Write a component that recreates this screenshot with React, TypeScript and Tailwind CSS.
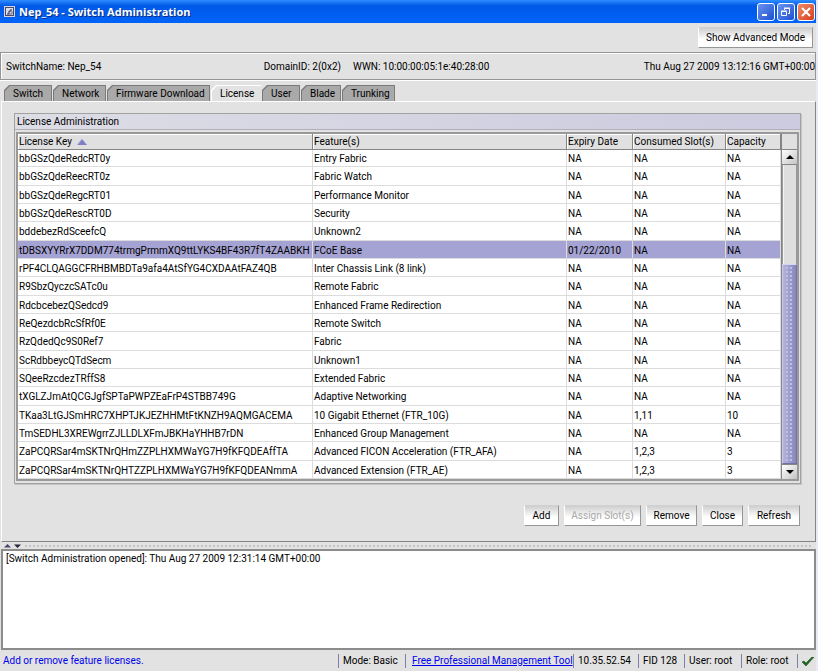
import React from 'react';

interface License {
  key: string;
  feature: string;
  expiry?: string;
  slots?: string;
  capacity?: string;
}

const licenses: License[] = [
  { key: 'bbGSzQdeRedcRT0y', feature: 'Entry Fabric' },
  { key: 'bbGSzQdeReecRT0z', feature: 'Fabric Watch' },
  { key: 'bbGSzQdeRegcRT01', feature: 'Performance Monitor' },
  { key: 'bbGSzQdeRescRT0D', feature: 'Security' },
  { key: 'bddebezRdSceefcQ', feature: 'Unknown2' },
  { key: 'tDBSXYYRrX7DDM774trmgPrmmXQ9ttLYKS4BF43R7fT4ZAABKH', feature: 'FCoE Base', expiry: '01/22/2010' },
  { key: 'rPF4CLQAGGCFRHBMBDTa9afa4AtSfYG4CXDAAtFAZ4QB', feature: 'Inter Chassis Link (8 link)' },
  { key: 'R9SbzQyczcSATc0u', feature: 'Remote Fabric' },
  { key: 'RdcbcebezQSedcd9', feature: 'Enhanced Frame Redirection' },
  { key: 'ReQezdcbRcSfRf0E', feature: 'Remote Switch' },
  { key: 'RzQdedQc9S0Ref7', feature: 'Fabric' },
  { key: 'ScRdbbeycQTdSecm', feature: 'Unknown1' },
  { key: 'SQeeRzcdezTRffS8', feature: 'Extended Fabric' },
  { key: 'tXGLZJmAtQCGJgfSPTaPWPZEaFrP4STBB749G', feature: 'Adaptive Networking' },
  { key: 'TKaa3LtGJSmHRC7XHPTJKJEZHHMtFtKNZH9AQMGACEMA', feature: '10 Gigabit Ethernet (FTR_10G)', slots: '1,11', capacity: '10' },
  { key: 'TmSEDHL3XREWgrrZJLLDLXFmJBKHaYHHB7rDN', feature: 'Enhanced Group Management' },
  { key: 'ZaPCQRSar4mSKTNrQHmZZPLHXMWaYG7H9fKFQDEAffTA', feature: 'Advanced FICON Acceleration (FTR_AFA)', slots: '1,2,3', capacity: '3' },
  { key: 'ZaPCQRSar4mSKTNrQHTZZPLHXMWaYG7H9fKFQDEANmmA', feature: 'Advanced Extension (FTR_AE)', slots: '1,2,3', capacity: '3' },
];

const selectedKey = licenses[5].key;

const tabs = [
  { name: 'Switch', width: 'w-12' },
  { name: 'Network', width: 'w-[53px]' },
  { name: 'Firmware Download', width: 'w-[103px]' },
  { name: 'License', width: 'w-[50px]' },
  { name: 'User', width: 'w-[38px]' },
  { name: 'Blade', width: 'w-10' },
  { name: 'Trunking', width: 'w-[53px]' },
];

const tabShape = '[clip-path:polygon(5px_0,100%_0,100%_100%,0_100%,0_5px)]';

const Tab = ({ name, width, active }: { name: string; width: string; active: boolean }) => (
  <button
    role="tab"
    aria-selected={active}
    className={`${width} ${tabShape} h-4 shrink-0 ${active ? 'bg-white pt-px pl-px' : 'bg-[#7b7b7b] p-px pb-0'}`}
  >
    <span
      className={`${tabShape} flex h-full items-center pl-2 whitespace-nowrap ${
        active ? 'bg-[#e2e2e2]' : 'bg-[#a9a9a9]'
      }`}
    >
      {name}
    </span>
  </button>
);

const PushButton = ({ children, width, disabled }: { children: React.ReactNode; width: string; disabled?: boolean }) => (
  <button
    disabled={disabled}
    className={`${width} h-[21px] border border-t-[#d0d0d0] border-l-white border-r-[#969696] border-b-[#969696] bg-linear-to-b from-[#cfcfcf] to-white to-60% whitespace-nowrap disabled:text-[#a8a8a8]`}
  >
    {children}
  </button>
);

const WindowButton = ({ label, color, children }: { label: string; color: string; children: React.ReactNode }) => (
  <button
    aria-label={label}
    className={`flex size-[18px] items-center justify-center rounded-[3px] border border-white ${color}`}
  >
    <svg width="12" height="12" viewBox="0 0 12 12" fill="none" stroke="#fff">
      {children}
    </svg>
  </button>
);

const TitleBar = () => (
  <header className="flex h-[23px] items-center bg-linear-to-b from-[#2f8cff] via-[#0058e6] via-25% to-[#0064fa] pr-px pl-1">
    <svg width="11" height="11" viewBox="0 0 11 11" aria-hidden="true">
      <rect x=".5" y=".5" width="10" height="10" fill="#4a4a6c" stroke="#d6d3e2" />
      <path d="M2 2h7v7H2z" fill="#dcdce8" />
      <path d="M3 8h2V5h2V3" fill="none" stroke="#25254a" />
      <path d="M5 8h3V5" fill="none" stroke="#65658a" />
    </svg>
    <h1 className="ml-1 flex-1 font-['Open_Sans',sans-serif] text-[11px] font-bold text-white [text-shadow:1px_1px_#0a2a80]">
      Nep_54 - Switch Administration
    </h1>
    <div className="flex gap-[2px]">
      <WindowButton label="Minimize" color="bg-linear-to-br from-[#6b92f0] to-[#1d4fd0]">
        <path d="M2 9h5" strokeWidth="2" />
      </WindowButton>
      <WindowButton label="Restore" color="bg-linear-to-br from-[#6b92f0] to-[#1d4fd0]">
        <path d="M4.5 4V2.500h5v5H8M4 2h6" />
        <path d="M1.500 5.500h5v4h-5zM1 5h6" />
      </WindowButton>
      <WindowButton label="Close" color="bg-linear-to-br from-[#f08a68] to-[#d63c12]">
        <path d="M2 2l8 8M10 2l-8 8" strokeWidth="2" />
      </WindowButton>
    </div>
  </header>
);

const LicenseTable = () => (
  <table className="w-full flex-1 table-fixed border-separate border-spacing-0 text-left">
    <colgroup>
      <col className="w-[295px]" />
      <col />
      <col className="w-[66px]" />
      <col className="w-[93px]" />
      <col className="w-[55px]" />
    </colgroup>
    <thead>
      <tr className="h-4 bg-[#e0e0e0]">
        {['License Key', 'Feature(s)', 'Expiry Date', 'Consumed Slot(s)', 'Capacity'].map((title) => (
          <th
            key={title}
            scope="col"
            className="border-r border-b border-[#858585] p-0 pl-px font-normal whitespace-nowrap shadow-[inset_1px_1px_#fff]"
          >
            {title}
            {title === 'License Key' && (
              <svg className="ml-[5px] inline align-baseline" width="10" height="6" viewBox="0 0 10 6" aria-hidden="true">
                <path d="M5 0l5 6H0z" fill="#7f7fc4" />
                <path d="M5 0L0 6" stroke="#b9b9e6" />
              </svg>
            )}
          </th>
        ))}
      </tr>
    </thead>
    <tbody>
      {licenses.map(({ key, feature, expiry = 'NA', slots = 'NA', capacity = 'NA' }) => (
        <tr
          key={key}
          aria-selected={key === selectedKey}
          className={`h-[18px] first:h-[17px] nth-[3n+2]:h-[19px] ${key === selectedKey ? 'bg-[#a5a3d3]' : 'bg-white'}`}
        >
          {[key, feature, expiry, slots, capacity].map((value, i) => (
            <td key={i} className="border-r border-b border-[#dcdcdc] p-0 pt-[2px] pl-px whitespace-nowrap">
              {value}
            </td>
          ))}
        </tr>
      ))}
    </tbody>
  </table>
);

const ScrollBar = () => (
  <div className="flex w-4 shrink-0 flex-col border-l border-[#858585]">
    <div className="h-4 border-b border-[#858585] bg-[#e0e0e0]" />
    <button
      aria-label="Scroll up"
      className="flex h-[15px] items-center justify-center border-b border-[#858585] bg-linear-to-br from-white to-[#c4c4c4]"
    >
      <svg width="8" height="4" viewBox="0 0 8 4"><path d="M4 0l4 4H0z" /></svg>
    </button>
    <div className="flex flex-1 flex-col bg-[#dedede]">
      <div className="flex-1 border-r border-l border-[#9a9a9a] shadow-[inset_1px_0_#f4f4f4]" />
      {/* thumb */}
      <div className="h-[200px] border border-t-[#d5d5f2] border-r-[#7372a8] border-b-[#7372a8] border-l-[#c7c7ea] bg-linear-to-r from-[#b5b4dd] to-[#8786bb] px-[2px] py-px">
        <div className="h-full bg-[radial-gradient(circle,#c0c0e6_1px,transparent_1px)] bg-size-[4px_4px]" />
      </div>
    </div>
    <button
      aria-label="Scroll down"
      className="flex h-[15px] items-center justify-center border-t border-[#858585] bg-linear-to-br from-white to-[#c4c4c4]"
    >
      <svg width="8" height="4" viewBox="0 0 8 4"><path d="M0 0h8L4 4z" /></svg>
    </button>
  </div>
);

const StatusItem = ({ children, width }: { children: React.ReactNode; width: string }) => (
  <div className={`${width} flex h-[14px] shrink-0 items-center border-l border-[#7f7fae] pl-1 whitespace-nowrap`}>
    {children}
  </div>
);

const App = () => (
  <div className="flex min-h-screen flex-col border-r-2 border-[#e6ebf7] bg-[#e2e2e2] font-[Roboto,'Liberation_Sans',sans-serif] text-[10px] leading-3 text-black">
    <TitleBar />

    <div className="flex justify-end px-[3px] pt-1 pb-1">
      <PushButton width="w-[115px]">Show Advanced Mode</PushButton>
    </div>

    <section className="flex h-7 items-center justify-between border border-[#949494] pt-px pl-[5px] shadow-[inset_1px_1px_#fff,0_1px_#fff]">
      <span>SwitchName: Nep_54</span>
      <div className="flex gap-3 pl-2">
        <span>DomainID: 2(0x2)</span>
        <span>WWN: 10:00:00:05:1e:40:28:00</span>
      </div>
      <span>Thu Aug 27 2009 13:12:16 GMT+00:00</span>
    </section>

    <div role="tablist" className="mt-[5px] flex gap-px pl-1">
      {tabs.map((tab) => (
        <Tab key={tab.name} {...tab} active={tab.name === 'License'} />
      ))}
    </div>

    <main className="ml-px border border-t-white border-r-[#858585] border-b-[#858585] border-l-white pt-[11px] pr-[14px] pb-[15px] pl-3">
      <section className="border border-[#a2a2a2] shadow-[1px_1px_#c4c4c4]">
        <h2 className="flex h-4 items-center border-b border-[#b0b0b8] bg-linear-to-r from-[#dddde6] to-[#cccbdf] pl-[2px]">
          License Administration
        </h2>
        <div className="mx-px mt-[2px] mb-[2px] flex border-2 border-[#999]">
          <LicenseTable />
          <ScrollBar />
        </div>
      </section>

      <div className="mt-[21px] flex justify-end gap-[5px] pr-px">
        <PushButton width="w-[35px]">Add</PushButton>
        <PushButton width="w-[77px]" disabled>Assign Slot(s)</PushButton>
        <PushButton width="w-[51px]">Remove</PushButton>
        <PushButton width="w-[41px]">Close</PushButton>
        <PushButton width="w-[52px]">Refresh</PushButton>
      </div>
    </main>

    {/* split pane divider */}
    <div className="flex h-[7px] items-center gap-[3px] px-1">
      <svg width="17" height="4" viewBox="0 0 17 4" aria-hidden="true">
        <path d="M0 3.500L3.500 0L7 3.500z" fill="#45456f" />
        <path d="M10 .5h7L13.500 4z" fill="#25253d" />
      </svg>
      <div className="h-1 flex-1 bg-[radial-gradient(circle,#c4c4c4_1px,transparent_1px)] bg-size-[4px_4px]" />
    </div>

    <textarea
      readOnly
      aria-label="Event log"
      className="ml-px block min-h-[101px] flex-1 resize-none border-2 border-[#8c8c8c] bg-white px-[3px] py-[2px] outline-none"
      value="[Switch Administration opened]: Thu Aug 27 2009 12:31:14 GMT+00:00"
    />

    <footer className="flex h-[21px] items-center pt-px pl-[3px]">
      <span className="flex-1 text-[#0000ee]">Add or remove feature licenses.</span>
      <StatusItem width="w-[67px]">Mode: Basic</StatusItem>
      <StatusItem width="w-[168px]">
        <a href="#management-tool" className="pl-[2px] text-[#0000ee] underline">Free Professional Management Tool</a>
      </StatusItem>
      <StatusItem width="w-[65px]">10.35.52.54</StatusItem>
      <StatusItem width="w-[46px]">FID 128</StatusItem>
      <StatusItem width="w-[57px]">User: root</StatusItem>
      <StatusItem width="w-14">Role: root</StatusItem>
      <StatusItem width="w-[19px]">
        <svg width="12" height="9" viewBox="0 0 12 9" role="img" aria-label="Connected">
          <path d="M0 5l2-1 2 2 6-6h2L4 9z" fill="#1f6a24" stroke="#123c12" strokeWidth=".5" />
        </svg>
      </StatusItem>
    </footer>
  </div>
);

export default App;
